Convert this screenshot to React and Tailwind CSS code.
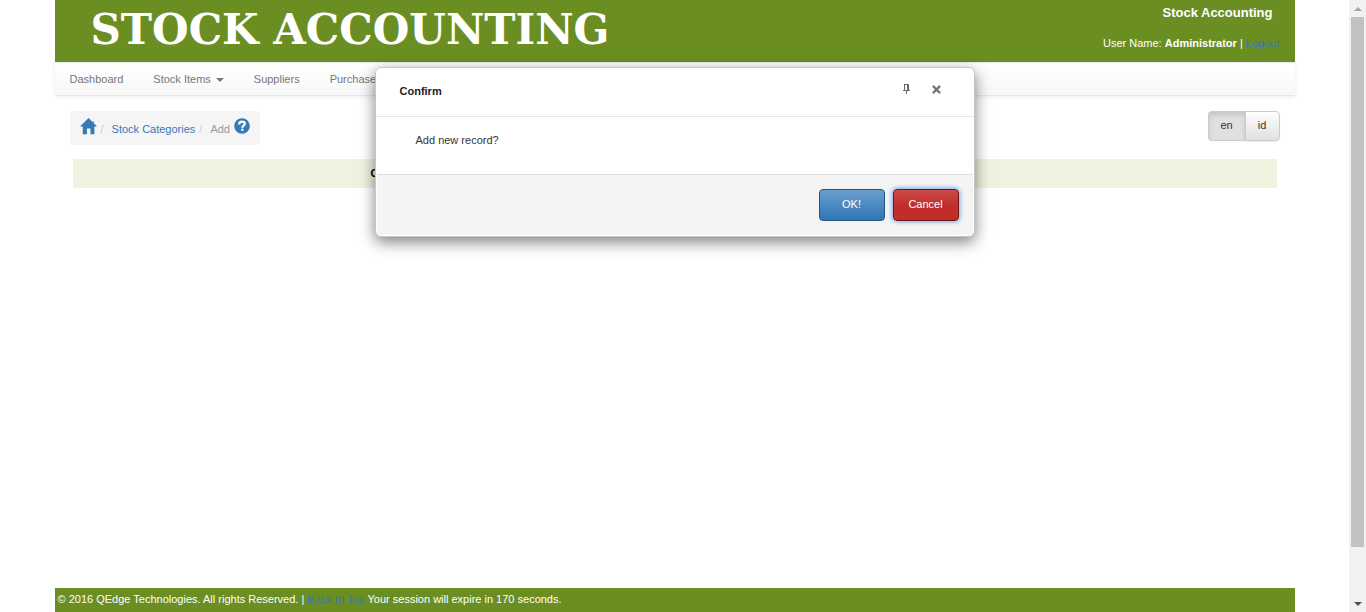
const NAV_ITEMS = [
  { label: 'Dashboard' },
  { label: 'Stock Items', menu: true },
  { label: 'Suppliers' },
  { label: 'Purchases', menu: true },
];

function HomeIcon() {
  return (
    <svg viewBox="0 0 17 17" className="h-[17px] w-[17px]" fill="currentColor" aria-hidden="true">
      <path d="M8.5 0 L12.6 4.1 V3.6 H13.8 V5.3 L17 8.6 H14.4 V16.2 H10.5 V10.6 H6.9 V16.2 H2.8 V8.6 H0 Z" />
    </svg>
  );
}

function HelpIcon() {
  return (
    <svg viewBox="0 0 16 16" className="h-4 w-4" aria-hidden="true">
      <circle cx="8" cy="8" r="7.8" fill="currentColor" />
      <path
        d="M5.2 6.4 C5.2 4.2 6.4 3.6 8 3.6 C9.8 3.6 10.8 4.5 10.8 5.8 C10.8 7.6 8.3 7.6 8.3 9.8"
        fill="none"
        stroke="#fff"
        strokeWidth="2.3"
      />
      <rect x="7.1" y="10.7" width="2.4" height="2.1" fill="#fff" />
    </svg>
  );
}

function PinIcon() {
  return (
    <svg viewBox="0 0 8 11" className="h-[11px] w-2" fill="#6b6b6b" shapeRendering="crispEdges" aria-hidden="true">
      <path d="M1 0 H6 V6 H7 V7 H4 V10 H3 V7 H0 V6 H1 Z M2 1 V6 H4 V1 Z" fillRule="evenodd" />
    </svg>
  );
}

function CloseIcon() {
  return (
    <svg viewBox="0 0 9 9" className="h-[9px] w-[9px]" fill="none" stroke="#757575" strokeWidth="2.2" aria-hidden="true">
      <path d="M0.9 0.9 L8.1 8.1 M8.1 0.9 L0.9 8.1" />
    </svg>
  );
}

function Header() {
  return (
    <header className="flex h-[62px] justify-between bg-[#6b8e23] text-white">
      <h1 className="pl-9 font-['DejaVu_Serif','Liberation_Serif',serif] text-[42px] leading-[60px] font-bold whitespace-nowrap">
        STOCK ACCOUNTING
      </h1>
      <div className="flex flex-col items-end gap-[15px] pr-[15px]">
        <strong className="pt-1 pr-[7px] text-[13px] leading-[18px]">Stock Accounting</strong>
        <p className="leading-3">
          User Name: <strong>Administrator</strong> |{' '}
          <a href="#logout" className="text-[#337ab7]">Logout</a>
        </p>
      </div>
    </header>
  );
}

function NavBar() {
  return (
    <nav className="border-y border-[#e7e7e7] bg-linear-to-b from-white to-[#f8f8f8] shadow-[0_1px_5px_rgba(0,0,0,0.075)]">
      <ul className="flex h-8">
        {NAV_ITEMS.map((item) => (
          <li key={item.label}>
            <a href="#nav" className="flex h-8 items-center gap-[5px] px-[15px] text-[#777777]">
              {item.label}
              {item.menu && (
                <span className="mt-px border-x-4 border-t-4 border-x-transparent border-t-[#777777]" />
              )}
            </a>
          </li>
        ))}
      </ul>
    </nav>
  );
}

function Toolbar() {
  return (
    <div className="flex items-start justify-between px-[15px] pt-[15px]">
      <ol className="flex h-[34px] items-center rounded-sm bg-[#f5f5f5] px-[10px] text-[#337ab7]">
        <li>
          <a href="#home" aria-label="Home" className="block pb-1">
            <HomeIcon />
          </a>
        </li>
        <li className="px-1 pt-0.5 text-[#cccccc]" aria-hidden="true">/</li>
        <li className="pt-0.5 pl-1">
          <a href="#categories">Stock Categories</a>
        </li>
        <li className="px-1 pt-0.5 text-[#cccccc]" aria-hidden="true">/</li>
        <li className="flex items-center gap-1 pl-1">
          <span className="pt-0.5 text-[#999999]">Add</span>
          <a href="#help" aria-label="Help" className="block pb-1">
            <HelpIcon />
          </a>
        </li>
      </ol>
      <div className="flex text-[#333333]">
        <button
          type="button"
          aria-pressed="true"
          className="h-[30px] w-[37px] rounded-l-sm border border-r-0 border-[#cccccc] bg-[#e0e0e0] pb-[3px] shadow-[inset_0_3px_5px_rgba(0,0,0,0.125)]"
        >
          en
        </button>
        <button
          type="button"
          className="h-[30px] w-[35px] rounded-r-sm border border-[#cccccc] bg-linear-to-b from-white to-[#e0e0e0] pb-[3px] shadow-[0_1px_1px_rgba(0,0,0,0.075)]"
        >
          id
        </button>
      </div>
    </div>
  );
}

function ConfirmDialog() {
  return (
    <div className="absolute inset-x-0 top-[67px] flex justify-center">
      <section
        role="dialog"
        aria-labelledby="confirm-title"
        className="w-[600px] rounded-md border border-[#c6c6c6] bg-white shadow-[0_5px_15px_rgba(0,0,0,0.5)]"
      >
        <div className="flex h-[49px] items-center justify-between border-b border-[#e5e5e5] pr-[33px] pl-6">
          <h2 id="confirm-title" className="pb-[3px] font-bold text-[#222222]">Confirm</h2>
          <div className="flex items-center gap-[21px] pb-[5px]">
            <button type="button" aria-label="Pin">
              <PinIcon />
            </button>
            <button type="button" aria-label="Close">
              <CloseIcon />
            </button>
          </div>
        </div>
        <p className="h-[57px] px-10 pt-[15px] leading-4 text-[#333333]">Add new record?</p>
        <div className="px-px pb-px">
          <div className="flex h-[61px] justify-end gap-2 rounded-b-sm border-t border-[#dddddd] bg-[#f4f4f4] pt-[14px] pr-[14px] text-white">
            <button
              type="button"
              className="h-8 w-[66px] rounded-sm border border-[#245580] bg-linear-to-b from-[#6a9fcd] to-[#2e76b6] pb-[3px]"
            >
              OK!
            </button>
            <button
              type="button"
              className="h-8 w-[66px] rounded-sm border border-[#6e1715] bg-linear-to-b from-[#cb4b48] to-[#c12e2a] to-50% pb-[3px] shadow-[0_0_4px_1px_rgba(82,145,230,0.8)]"
            >
              Cancel
            </button>
          </div>
        </div>
      </section>
    </div>
  );
}

function ScrollTrack() {
  return (
    <div className="flex w-[17px] shrink-0 flex-col items-center bg-[#f1f1f1]" aria-hidden="true">
      <div className="flex h-[17px] items-center">
        <span className="border-x-4 border-b-4 border-x-transparent border-b-[#a3a3a3]" />
      </div>
      <div className="flex w-full grow flex-col px-[2px]">
        <div className="grow-[530] bg-[#c1c1c1]" />
        <div className="grow-[48]" />
      </div>
      <div className="flex h-[17px] items-center">
        <span className="border-x-4 border-t-4 border-x-transparent border-t-[#505050]" />
      </div>
    </div>
  );
}

export default function App() {
  return (
    <div className="flex min-h-screen bg-white font-['Liberation_Sans',Arial,sans-serif] text-[11px] leading-4 text-[#333333]">
      <div className="relative flex grow flex-col">
        <div className="mx-auto flex w-full max-w-[1240px] grow flex-col">
          <Header />
          <NavBar />
          <Toolbar />
          <main className="grow px-[18px] pt-[14px]">
            <div className="bg-[#eef3e0] py-[6px] pl-[298px] leading-[17px] font-bold text-black">Category</div>
          </main>
          <footer className="h-6 bg-[#6b8e23] px-[3px] pt-[3px] text-white">
            © 2016 QEdge Technologies. All rights Reserved. |{' '}
            <a href="#top" className="text-[#337ab7]">Back to Top</a> Your session will expire in 170 seconds.
          </footer>
        </div>
        <ConfirmDialog />
      </div>
      <ScrollTrack />
    </div>
  );
}
